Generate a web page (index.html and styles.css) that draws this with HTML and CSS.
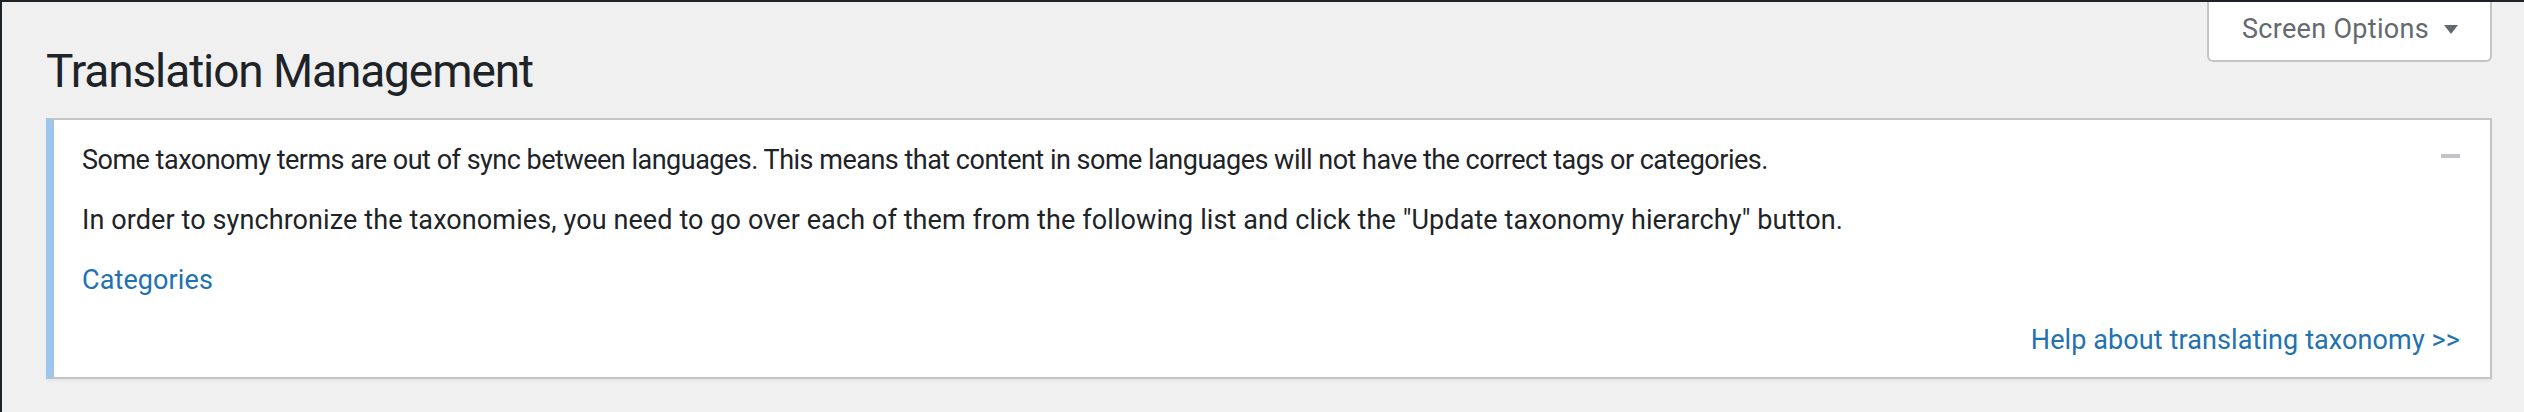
FILE: index.html
```html
<!DOCTYPE html>
<html lang="en">
<head>
<meta charset="utf-8">
<title>Translation Management</title>
<link rel="stylesheet" href="styles.css">
</head>
<body>
<div class="screen">
  <div class="wrap">
    <div class="header">
      <h1 class="title">Translation Management</h1>
      <button class="screen-options" type="button">
        <span class="so-label">Screen Options</span>
        <svg class="so-arrow" width="14" height="9" viewBox="0 0 14 9"><polygon points="0,0 14,0 7,9" fill="#646970"/></svg>
      </button>
    </div>
    <div class="notice">
      <button class="collapse" type="button" aria-label="Collapse"><span class="minus"></span></button>
      <p class="msg lead">Some taxonomy terms are out of sync between languages. This means that content in some languages will not have the correct tags or categories.</p>
      <p class="msg">In order to synchronize the taxonomies, you need to go over each of them from the following list and click the "Update taxonomy hierarchy" button.</p>
      <p class="msg"><a class="link" href="#">Categories</a></p>
      <p class="msg help"><a class="link" href="#">Help about translating taxonomy &gt;&gt;</a></p>
    </div>
  </div>
</div>
</body>
</html>
```

FILE: styles.css
```css
* { box-sizing: border-box; }
html, body { margin: 0; padding: 0; }
body {
  background: #f0f0f1;
  font-family: Roboto, "Noto Sans", sans-serif;
  color: #1d2327;
}
.screen {
  min-height: 412px;
  border-top: 2px solid #1d2327;
  border-left: 2px solid #1d2327;
}
.wrap {
  margin: 0 32px 0 44px;
}
.header {
  display: flex;
  justify-content: space-between;
  align-items: flex-start;
}
.title {
  margin: 39px 0 0 0;
  font-size: 46px;
  line-height: 60px;
  font-weight: 400;
  letter-spacing: -1.1px;
  color: #1d2327;
}
.screen-options {
  display: flex;
  align-items: center;
  height: 60px;
  width: 285px;
  margin: 0;
  padding: 0 0 4px 33px;
  background: #fff;
  border: 2px solid #c3c4c7;
  border-top: none;
  border-radius: 0 0 6px 6px;
  font-family: inherit;
  font-size: 27px;
  letter-spacing: 0.3px;
  color: #646970;
  gap: 15px;
}
.so-arrow { display: block; }
.notice {
  position: relative;
  margin-top: 17px;
  background: #fff;
  border: 2px solid #c3c4c7;
  border-left: 8px solid #9ec5ec;
  box-shadow: 0 2px 2px rgba(0, 0, 0, 0.04);
  padding: 4px 24px 0 24px;
}
.msg {
  margin: 13px 0;
  padding: 4px;
  font-size: 27px;
  line-height: 39px;
  letter-spacing: 0.1px;
}
.lead {
  letter-spacing: -0.5px;
}
.help {
  text-align: right;
  padding-right: 6px;
}
.link {
  color: #2271b1;
  text-decoration: none;
}
.collapse {
  position: absolute;
  top: 24px;
  right: 30px;
  width: 24px;
  height: 24px;
  padding: 0;
  border: none;
  background: none;
  display: flex;
  align-items: center;
  justify-content: flex-end;
}
.minus {
  display: block;
  width: 19px;
  height: 4px;
  background: #c3c4c7;
}
```
